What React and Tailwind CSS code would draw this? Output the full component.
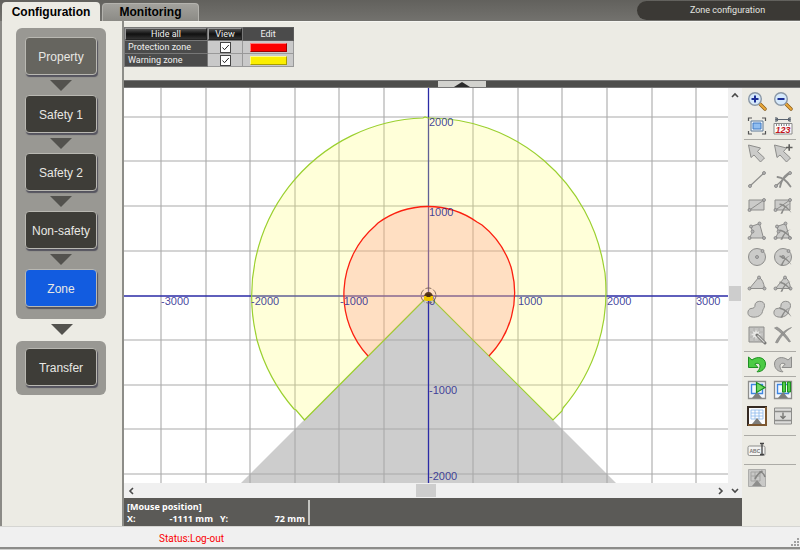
import { useState } from "react";

const steps = ["Property", "Safety 1", "Safety 2", "Non-safety", "Zone"];

const gridX = [37, 82, 126, 171, 215, 260, 349, 394, 438, 483, 528, 572];
const gridY = [29, 73, 118, 163, 252, 297, 341, 386];

const xLabels = [
  { text: "-3000", x: 37 },
  { text: "-2000", x: 127 },
  { text: "-1000", x: 216 },
  { text: "0", x: 305 },
  { text: "1000", x: 394 },
  { text: "2000", x: 483 },
  { text: "3000", x: 572 },
];

const yLabels = [
  { text: "2000", y: 38 },
  { text: "1000", y: 128 },
  { text: "-1000", y: 306 },
  { text: "-2000", y: 392 },
];

const toolGroups = [
  {
    className: "pb-px",
    rowHeight: "h-[25px]",
    rows: [
      ["Zoom in", "Zoom out"],
      ["Fit", "Measure"],
    ],
  },
  {
    className: "pb-[3px]",
    rowHeight: "h-[26px]",
    rows: [
      ["Select", "Add select"],
      ["Line", "Delete line"],
      ["Rectangle", "Delete rectangle"],
      ["Polygon", "Delete polygon"],
      ["Circle", "Delete circle"],
      ["Sector", "Delete sector"],
      ["Freehand", "Delete freehand"],
      ["Edit area", "Clear"],
    ],
  },
  { className: "", rowHeight: "h-[24px]", rows: [["Undo", "Redo"]] },
  {
    className: "pb-[6px]",
    rowHeight: "h-[26px]",
    rows: [
      ["Start monitor", "Pause monitor"],
      ["Teaching", "Import"],
    ],
  },
  { className: "py-px", rowHeight: "h-[26px]", rows: [["Comment"]] },
  { className: "border-b-0", rowHeight: "h-[26px]", rows: [["Calibrate"]] },
];

export default function App() {
  const [tab, setTab] = useState("Configuration");
  const [step, setStep] = useState("Zone");
  const [visible, setVisible] = useState({ protection: true, warning: true });

  function toggle(name) {
    setVisible({ ...visible, [name]: !visible[name] });
  }

  return (
    <div className="bg-[#f0f0f0] font-['Liberation_Sans',sans-serif] text-black">
      <header className="flex h-[21px] items-end justify-between bg-linear-to-b from-[#62615d] to-[#73726e] pl-[2px]">
        <nav className="flex items-end gap-[2px]">
          <Tab name="Configuration" active={tab === "Configuration"} onClick={setTab} />
          <Tab name="Monitoring" active={tab === "Monitoring"} onClick={setTab} />
        </nav>
        <h1 className="mb-px flex h-[19px] w-[163px] items-center justify-center rounded-l-full bg-[#3b3935] pl-[18px] font-['Roboto',sans-serif] text-[9px] text-[#e4e4e0]">
          Zone configuration
        </h1>
      </header>

      <div className="flex border-l-2 border-[#8b8a86] bg-[#ecebe4]">
        <aside className="w-[120px] shrink-0 pt-[7px] pl-[14px]">
          <div className="flex w-[90px] flex-col items-center rounded-md bg-[#999893] pt-[9px] pb-[12px]">
            {steps.map((name, i) => (
              <div key={name} className="flex flex-col items-center">
                {i > 0 ? <Arrow /> : null}
                <StepButton name={name} active={step === name} onClick={setStep} />
              </div>
            ))}
          </div>
          <div className="flex w-[92px] flex-col items-center">
            <Arrow />
          </div>
          <div className="mt-[2px] flex w-[90px] flex-col items-center rounded-md bg-[#999893] pt-[7px] pb-[9px]">
            <StepButton name="Transfer" active={step === "Transfer"} onClick={setStep} />
          </div>
        </aside>

        <main className="min-w-0 flex-1 border-l-2 border-[#8d8d88]">
          <section className="h-[59px] border-t border-[#f6f6f2] pt-[5px]">
            <table className="w-[170px] table-fixed border-collapse bg-[#4b4b4b] font-['Roboto',sans-serif] text-[9px] leading-[11px] text-[#f0f0f0]">
              <thead>
                <tr className="h-[13px]">
                  <th className="w-[83px] border border-[#777] p-0 font-normal">
                    <BevelButton onClick={() => setVisible({ protection: false, warning: false })}>Hide all</BevelButton>
                  </th>
                  <th className="w-[35px] border border-[#777] p-0 font-normal">
                    <BevelButton onClick={() => setVisible({ protection: true, warning: true })}>View</BevelButton>
                  </th>
                  <th className="border border-[#5c5c5c] p-0 font-normal">Edit</th>
                </tr>
              </thead>
              <tbody>
                <ZoneRow
                  id="protection"
                  label="Protection zone"
                  swatch="bg-[#fb0000] border-t-[#ff7a7a] border-l-[#ff7a7a] border-r-[#a00000] border-b-[#a00000]"
                  checked={visible.protection}
                  onChange={toggle}
                />
                <ZoneRow
                  id="warning"
                  label="Warning zone"
                  swatch="bg-[#fbee00] border-t-[#fff98a] border-l-[#fff98a] border-r-[#a89e00] border-b-[#a89e00]"
                  checked={visible.warning}
                  onChange={toggle}
                />
              </tbody>
            </table>
          </section>

          <div className="flex h-[8px] justify-center border-y border-[#777] bg-[#4e4e4c] pr-[1px]">
            <button type="button" aria-label="Collapse" className="flex w-[48px] items-center justify-center bg-[#d2d2ce]">
              <svg className="h-[5px] w-[16px]" viewBox="0 0 16 5">
                <path d="M0 5 8 0l8 5z" fill="#2b2b2b" />
              </svg>
            </button>
          </div>

          <div className="flex">
            <div className="flex min-w-0 flex-1 flex-col">
              <div className="flex">
                <div className="min-w-0 flex-1">
                  <ZoneMap visible={visible} />
                  <div className="flex h-[15px] items-center justify-between bg-[#f0f0f0] px-[3px]">
                    <ScrollArrow label="Scroll left" d="M6 1 3 4l3 3" />
                    <span className="h-[13px] w-[20px] bg-[#cdcdcd]" />
                    <ScrollArrow label="Scroll right" d="M2 1l3 3-3 3" />
                  </div>
                </div>
                <div className="flex w-[14px] flex-col items-center justify-between bg-[#f0f0f0] py-[3px]">
                  <ScrollArrow label="Scroll up" d="M1 6l3-3 3 3" />
                  <span className="h-[15px] w-[12px] bg-[#cdcdcd]" />
                  <ScrollArrow label="Scroll down" d="M1 2l3 3 3-3" />
                </div>
              </div>
              <footer className="flex flex-1 bg-[#5b5a57] pt-[2px] font-['Open_Sans',sans-serif] text-[9px] leading-[12px] font-bold text-white">
                <div className="mb-px w-[186px] border-r-2 border-[#c4c4c0] pt-px pr-[3px] pl-[3px]">
                  <p>[Mouse position]</p>
                  <div className="flex">
                    <span className="w-[14px]">X:</span>
                    <span className="w-[72px] text-right">-1111 mm</span>
                    <span className="w-[21px] pl-[7px]">Y:</span>
                    <span className="flex-1 text-right">72 mm</span>
                  </div>
                </div>
              </footer>
            </div>

            <div className="w-[58px] shrink-0 pr-[4px] pb-[32px] pl-[2px]">
              {toolGroups.map((group) => (
                <div key={group.rows[0][0]} className={`border-b border-[#acaba6] ${group.className}`}>
                  {group.rows.map((row) => (
                    <div key={row[0]} className={`flex ${group.rowHeight}`}>
                      {row.map((name) => (
                        <button
                          key={name}
                          type="button"
                          title={name}
                          aria-label={name}
                          className="flex w-[26px] items-center justify-center"
                        >
                          <svg className="h-[20px] w-[20px]" viewBox="0 0 20 20" fill="none">
                            {icons[name]}
                          </svg>
                        </button>
                      ))}
                    </div>
                  ))}
                </div>
              ))}
            </div>
          </div>
        </main>
      </div>

      <div className="flex h-[21px] items-center justify-between border-t border-[#d5d5d2] pt-[3px] pl-[159px] text-[10px] text-[#fb0000]">
        <p className="font-['Roboto',sans-serif]">Status:Log-out</p>
        <svg className="h-[9px] w-[9px] self-end" viewBox="0 0 9 9" fill="#a0a0a0">
          <path d="M6 0h2v2H6zM6 3h2v2H6zM3 3h2v2H3zM0 6h2v2H0zM3 6h2v2H3zM6 6h2v2H6z" />
        </svg>
      </div>
      <div className="h-[3px] border-t-2 border-[#8c8c8a] bg-[#cfcfcd]" />
    </div>
  );
}

function Tab({ name, active, onClick }) {
  return (
    <button
      type="button"
      onClick={() => onClick(name)}
      className={
        active
          ? "h-[19px] w-[98px] rounded-t bg-[#ecebe4] pt-px text-[12px] leading-[18px] font-bold"
          : "h-[18px] w-[97px] rounded-t border border-b-0 border-[#b4b3ae] bg-linear-to-b from-[#a3a29d] to-[#8b8a85] text-[12px] leading-[17px] font-bold"
      }
    >
      {name}
    </button>
  );
}

function StepButton({ name, active, onClick }) {
  const tone = active ? "bg-[#125ce0]" : name === "Property" ? "bg-[#66655f]" : "bg-[#3e3d38]";

  return (
    <button
      type="button"
      onClick={() => onClick(name)}
      className={`h-[38px] w-[72px] rounded border border-[#b9b8b2] pt-[2px] text-[12px] text-[#e8e8e4] shadow-[1px_2px_1px_#55545f] ${tone}`}
    >
      {name}
    </button>
  );
}

function Arrow() {
  return (
    <svg className="h-[20px] w-[22px]" viewBox="0 0 22 20">
      <path d="M0 5h22L11 16z" fill="#53524e" />
    </svg>
  );
}

function BevelButton({ children, onClick }) {
  return (
    <button
      type="button"
      onClick={onClick}
      className="block h-[12px] w-full border border-[#999] border-r-[#222] border-b-[#222] bg-linear-to-b from-[#505050] via-[#111] to-[#333] leading-[10px]"
    >
      {children}
    </button>
  );
}

function ZoneRow({ id, label, swatch, checked, onChange }) {
  return (
    <tr className="h-[13px]">
      <th className="border border-[#777] p-0 pl-[3px] text-left font-normal">
        <label htmlFor={id}>{label}</label>
      </th>
      <td className="border border-[#999] bg-[#c9c9c9] p-0">
        <span className="relative mx-auto block h-[11px] w-[11px]">
          <input
            id={id}
            type="checkbox"
            checked={checked}
            onChange={() => onChange(id)}
            className="block h-[11px] w-[11px] appearance-none border border-[#444] bg-white"
          />
          {checked ? (
            <svg className="pointer-events-none absolute inset-0 h-[11px] w-[11px]" viewBox="0 0 11 11" fill="none">
              <path d="m2.500 5.500 2 2.200L8.800 3" stroke="#222" />
            </svg>
          ) : null}
        </span>
      </td>
      <td className="border border-[#999] bg-[#c9c9c9] p-0">
        <button type="button" aria-label={`Edit ${label}`} className={`mx-auto block h-[9px] w-[37px] border ${swatch}`} />
      </td>
    </tr>
  );
}

function ScrollArrow({ label, d }) {
  return (
    <button type="button" aria-label={label}>
      <svg className="h-[8px] w-[8px]" viewBox="0 0 8 8" fill="none">
        <path d={d} stroke="#4a4a4a" strokeWidth="1.600" />
      </svg>
    </button>
  );
}

const protectionArc = "M244 268A86.500 89 0 0 1 251 138l3-3A86.500 89 0 0 1 353 134l5 3A86.500 89 0 0 1 387 179l1 4A86.500 89 0 0 1 365 268";

function ZoneMap({ visible }) {
  return (
    <svg className="block h-auto w-full bg-white" viewBox="0 0 604 395">
      <path d="M304.500 207.500 117 395h375z" fill="#cdcdcd" />
      <g stroke="#aaa" strokeWidth="1.100">
        {gridX.map((x) => (
          <path key={x} d={`M${x} 0V395`} />
        ))}
        {gridY.map((y) => (
          <path key={y} d={`M0 ${y}H604`} />
        ))}
      </g>
      <path d="M0 208H604M304.500 0V395" stroke="#2b2ba6" strokeWidth="1.300" />

      {visible.warning ? (
        <path
          d="M304.500 207.500 180.500 332 172 322 170 321A177 178 0 0 1 133 252l-1-5A177 178 0 0 1 299 30l2-1 3 1A177 178 0 0 1 480 180l1 5A177 178 0 0 1 439 320l-1 3-9 9z"
          fill="#ffff66"
          fillOpacity="0.250"
          stroke="#9bd02f"
          strokeWidth="1.200"
        />
      ) : null}
      {visible.protection ? (
        <>
          <path d={`${protectionArc}L304.500 207.500z`} fill="#ff8080" fillOpacity="0.250" />
          <path d={protectionArc} fill="none" stroke="#fb2010" strokeWidth="1.300" />
        </>
      ) : null}

      <g fontSize="11" fill="#23238c" fillOpacity="0.850">
        {xLabels.map((label) => (
          <text key={label.text} x={label.x} y="217">
            {label.text}
          </text>
        ))}
        {yLabels.map((label) => (
          <text key={label.text} x="305" y={label.y}>
            {label.text}
          </text>
        ))}
      </g>

      {/* scanner head */}
      <circle cx="304.500" cy="207.500" r="7.500" fill="none" stroke="#6b5548" strokeWidth="0.800" strokeDasharray="6 2" />
      <path d="M300 209a4.500 5 0 0 1 9 0z" fill="#5a3a1c" />
      <path d="M300 208h9v4l-2 1h-5l-2-1z" fill="#efc400" />
      <path d="M302.500 206h4v3h-4z" fill="#4a2c14" />
    </svg>
  );
}

const node = { fill: "#b5b5b5", stroke: "#7f7f7f", strokeWidth: 0.8 };
const shape = { fill: "#cbcbc9", stroke: "#8d8d8b", strokeWidth: 1 };

function Nodes({ points }) {
  return points.map(([x, y]) => <circle key={`${x}-${y}`} cx={x} cy={y} r="1.500" {...node} />);
}

function Cross() {
  return (
    <g fill="#8a8a88">
      <path d="M6.500 8.500c5 .5 9 4 12 9.500-3.500-4-7.500-7-12-8z" />
      <path d="M18.500 8c-4.500 2-7 5-9 10.500l-2 .5C9.500 13.500 13 9.500 18.500 8z" />
    </g>
  );
}

function Magnifier({ plus }) {
  return (
    <>
      <path d="m12.500 12.500 5.500 5.500" stroke="#8a5a14" strokeWidth="3.400" strokeLinecap="round" />
      <path d="m12.500 12.500 5.500 5.500" stroke="#e9a93c" strokeWidth="2" strokeLinecap="round" />
      <circle cx="8" cy="8" r="6.300" fill="#d5e9fb" stroke="#8b98a6" strokeWidth="1.400" />
      <path d={plus ? "M4.500 8h7M8 4.500v7" : "M4.500 8h7"} stroke="#1c2f96" strokeWidth="2" />
    </>
  );
}

function Pointer() {
  return <path d="M1.500 2 4 14.500l3-2.500 6.500 7 4-4-7-6.500L13.500 5z" {...shape} />;
}

function Screen({ color = "#3f86e0", frame = "#8d8d8b", fill = "#f4f7fb" }) {
  return (
    <>
      <path d="M1.500 1.500h17v17h-17z" fill={fill} stroke={frame} strokeWidth="1.300" />
      <path d="M4.500 4.500h11v9h-11z" stroke={color} strokeWidth="1.400" />
      <path d="m10 12 5 6H5z" fill="#7e7e7c" />
    </>
  );
}

function Rect() {
  return (
    <>
      <path d="M2 5h15v10H2z" {...shape} />
      <path d="M2.500 15 17 5" stroke="#8d8d8b" />
      <Nodes points={[[2.5, 15], [17, 5]]} />
    </>
  );
}

function Polygon() {
  return (
    <>
      <path d="m4 5.500 8.500-3L16.500 17H2.500l3-6z" {...shape} />
      <Nodes points={[[4, 5.5], [12.5, 2.5], [17, 17], [2.5, 17], [5.5, 10.5]]} />
    </>
  );
}

function Circle() {
  return (
    <>
      <circle cx="10" cy="10" r="8.500" {...shape} />
      <Nodes points={[[10, 10], [15.5, 4]]} />
    </>
  );
}

function Sector() {
  return (
    <>
      <path d="M2.500 15.500 12 4c3 2 5 6 5.500 11.500z" {...shape} />
      <Nodes points={[[2.5, 15.5], [12, 4.5], [17.5, 15.5]]} />
    </>
  );
}

function Blob() {
  return (
    <path
      d="M8 6C8 1.500 17.500.500 17.500 6.500c0 3-1.500 3-2 6C14.500 18 7 19 3.500 17.500c-4-1.500-3-7.500.5-8C7 9.200 8 8.500 8 6z"
      {...shape}
    />
  );
}

const icons = {
  "Zoom in": <Magnifier plus />,
  "Zoom out": <Magnifier />,
  Fit: (
    <>
      <path d="M1.500 5V2H5M15 2h3.500v3M18.500 15v3H15M5 18H1.500v-3" stroke="#555" strokeWidth="1.200" />
      <path d="M4 5h12v10H4z" fill="#eef5fb" stroke="#5d7896" />
      <path d="M6 7h8v6H6z" fill="#8fbdf0" stroke="#3c78c4" />
    </>
  ),
  Measure: (
    <>
      <path d="M3 1v5M17 1v5M3 3.500h14" stroke="#5a6470" strokeWidth="1.200" />
      <path d="m2 3.500 3-2v4zM18 3.500l-3-2v4z" fill="#5a6470" />
      <path d="M1 7.500h18V18H1z" fill="#fafafa" stroke="#8a8a8a" />
      <path d="M3.500 8v2M6 8v2M8.500 8v2M11 8v2M13.500 8v2M16 8v2" stroke="#666" strokeWidth="0.800" />
      <text x="2.500" y="17.200" fontSize="9" fontWeight="bold" fontStyle="italic" fill="#c4161c">
        123
      </text>
    </>
  ),
  Select: <Pointer />,
  "Add select": (
    <>
      <Pointer />
      <path d="M13 4.500h6.500M16.200 1.200v6.600" stroke="#5f5f5d" strokeWidth="1.600" />
    </>
  ),
  Line: (
    <>
      <path d="M3 17 17 4" stroke="#8d8d8b" strokeWidth="1.200" />
      <Nodes points={[[3, 17], [17, 4]]} />
    </>
  ),
  "Delete line": (
    <>
      <path d="M3 17 17 4" stroke="#8d8d8b" strokeWidth="1.200" />
      <Nodes points={[[3, 17], [17, 4]]} />
      <path d="M4.500 8c5 .5 9 3.500 13 9.500M15 4.500c-4 3-7 8-8 13.500" stroke="#8e8e8c" strokeWidth="1.800" strokeLinecap="round" />
    </>
  ),
  Rectangle: <Rect />,
  "Delete rectangle": (
    <>
      <Rect />
      <Cross />
    </>
  ),
  Polygon: <Polygon />,
  "Delete polygon": (
    <>
      <Polygon />
      <Cross />
    </>
  ),
  Circle: <Circle />,
  "Delete circle": (
    <>
      <Circle />
      <Cross />
    </>
  ),
  Sector: <Sector />,
  "Delete sector": (
    <>
      <Sector />
      <Cross />
    </>
  ),
  Freehand: <Blob />,
  "Delete freehand": (
    <>
      <Blob />
      <Cross />
    </>
  ),
  "Edit area": (
    <>
      <path d="M2 2h15v15H2z" fill="#c4c4c2" stroke="#8d8d8b" />
      <path d="M7 2v15M12 2v15M2 7h15M2 12h15" stroke="#adadab" strokeWidth="0.800" />
      <path d="m9 4.500 1 2.500 2.500-1-1 2.500 2.500 1-2.500 1 1 2.500-2.500-1-1 2.500-1-2.500-2.500 1 1-2.500-2.500-1L6.500 8.500l-1-2.500L8 7z" fill="#e8e8e6" />
      <path d="m10 10 8 8" stroke="#777775" strokeWidth="3" strokeLinecap="round" />
      <path d="m10.500 10.500 7 7" stroke="#d6d6d4" strokeWidth="1.200" />
    </>
  ),
  Clear: (
    <g fill="#9a9a98" stroke="#7f7f7d" strokeWidth="0.600">
      <path d="M1.500 3 4 2c5 3 9.500 8 13.500 14.500l-1.500.5C11.500 11.500 7 6.500 1.500 3z" />
      <path d="M18.500 2.500C12 6.500 8 11.500 4.500 18l-2-.5C5.500 11 11 5 18.500 2.500z" />
    </g>
  ),
  Undo: (
    <path
      d="M1.500 3v10.500H11L7.800 10c3-1.700 5.700-.2 5.200 3-.3 1.700-1 3-3 4.800 5 .2 8.500-3.300 8.500-7.800 0-6.500-8-8.500-13.500-4z"
      fill="#4ccb45"
      stroke="#1f8f22"
    />
  ),
  Redo: (
    <path
      d="M18.500 3v10.500H9l3.200-3.500c-3-1.700-5.700-.2-5.200 3 .3 1.700 1 3 3 4.800-5 .2-8.500-3.300-8.500-7.800 0-6.500 8-8.500 13.500-4z"
      fill="#bdbdbb"
      stroke="#8d8d8b"
    />
  ),
  "Start monitor": (
    <>
      <Screen />
      <path d="M9.500 2.500v10L18 7.500z" fill="#6edb63" stroke="#1b8f1e" strokeWidth="1.200" />
    </>
  ),
  "Pause monitor": (
    <>
      <Screen />
      <path d="M9.500 2h3v10h-3zM14.500 2h3v10h-3z" fill="#52cc4a" stroke="#1b8f1e" />
    </>
  ),
  Teaching: (
    <>
      <path d="M1 1h18v18H1z" fill="#fbfcfe" stroke="#352a22" strokeWidth="2" />
      <path d="M19 1v18H1" stroke="#7c5730" strokeWidth="2" />
      <path d="M4 4h12v9H4zM8 4v9M12 4v9M4 7h12M4 10h12" stroke="#8db9ee" strokeWidth="0.800" />
      <path d="m10 12 5 6H5z" fill="#7e7e7c" />
    </>
  ),
  Import: (
    <>
      <path d="M1.500 2h17v16h-17z" {...shape} fill="#dcdcda" />
      <path d="M1.500 5.500h17M1.500 14.500h17" stroke="#8d8d8b" strokeWidth="1.400" />
      <path d="M10 6.500v6M7.500 10l2.500 2.500 2.500-2.500" stroke="#777775" strokeWidth="1.400" />
    </>
  ),
  Comment: (
    <>
      <rect x="1" y="6" width="17" height="9.500" rx="1.500" fill="#f4f4f2" stroke="#8d8d8b" />
      <text x="2.500" y="13" fontSize="5" fontWeight="bold" fill="#777">
        ABC
      </text>
      <path d="M13 3.500h4M15 3.500v11M13 14.500h4" stroke="#444" strokeWidth="1.300" />
    </>
  ),
  Calibrate: (
    <>
      <path d="M1.500 1.500h17v17h-17z" fill="#c9c9c7" stroke="#adadab" />
      <path d="M4 4h9v9H4zM8 4v9M4 8h9" stroke="#a5a5a3" />
      <path d="m10 12 5 6H5z" fill="#8e8e8c" />
      <path d="M8 11c2-4 4-6.500 7.500-8" stroke="#858583" strokeWidth="1.800" />
      <path d="M12.500 3.500c2.500.5 4.500 2.500 5.500 5.500" stroke="#858583" strokeWidth="1.500" />
    </>
  ),
};
